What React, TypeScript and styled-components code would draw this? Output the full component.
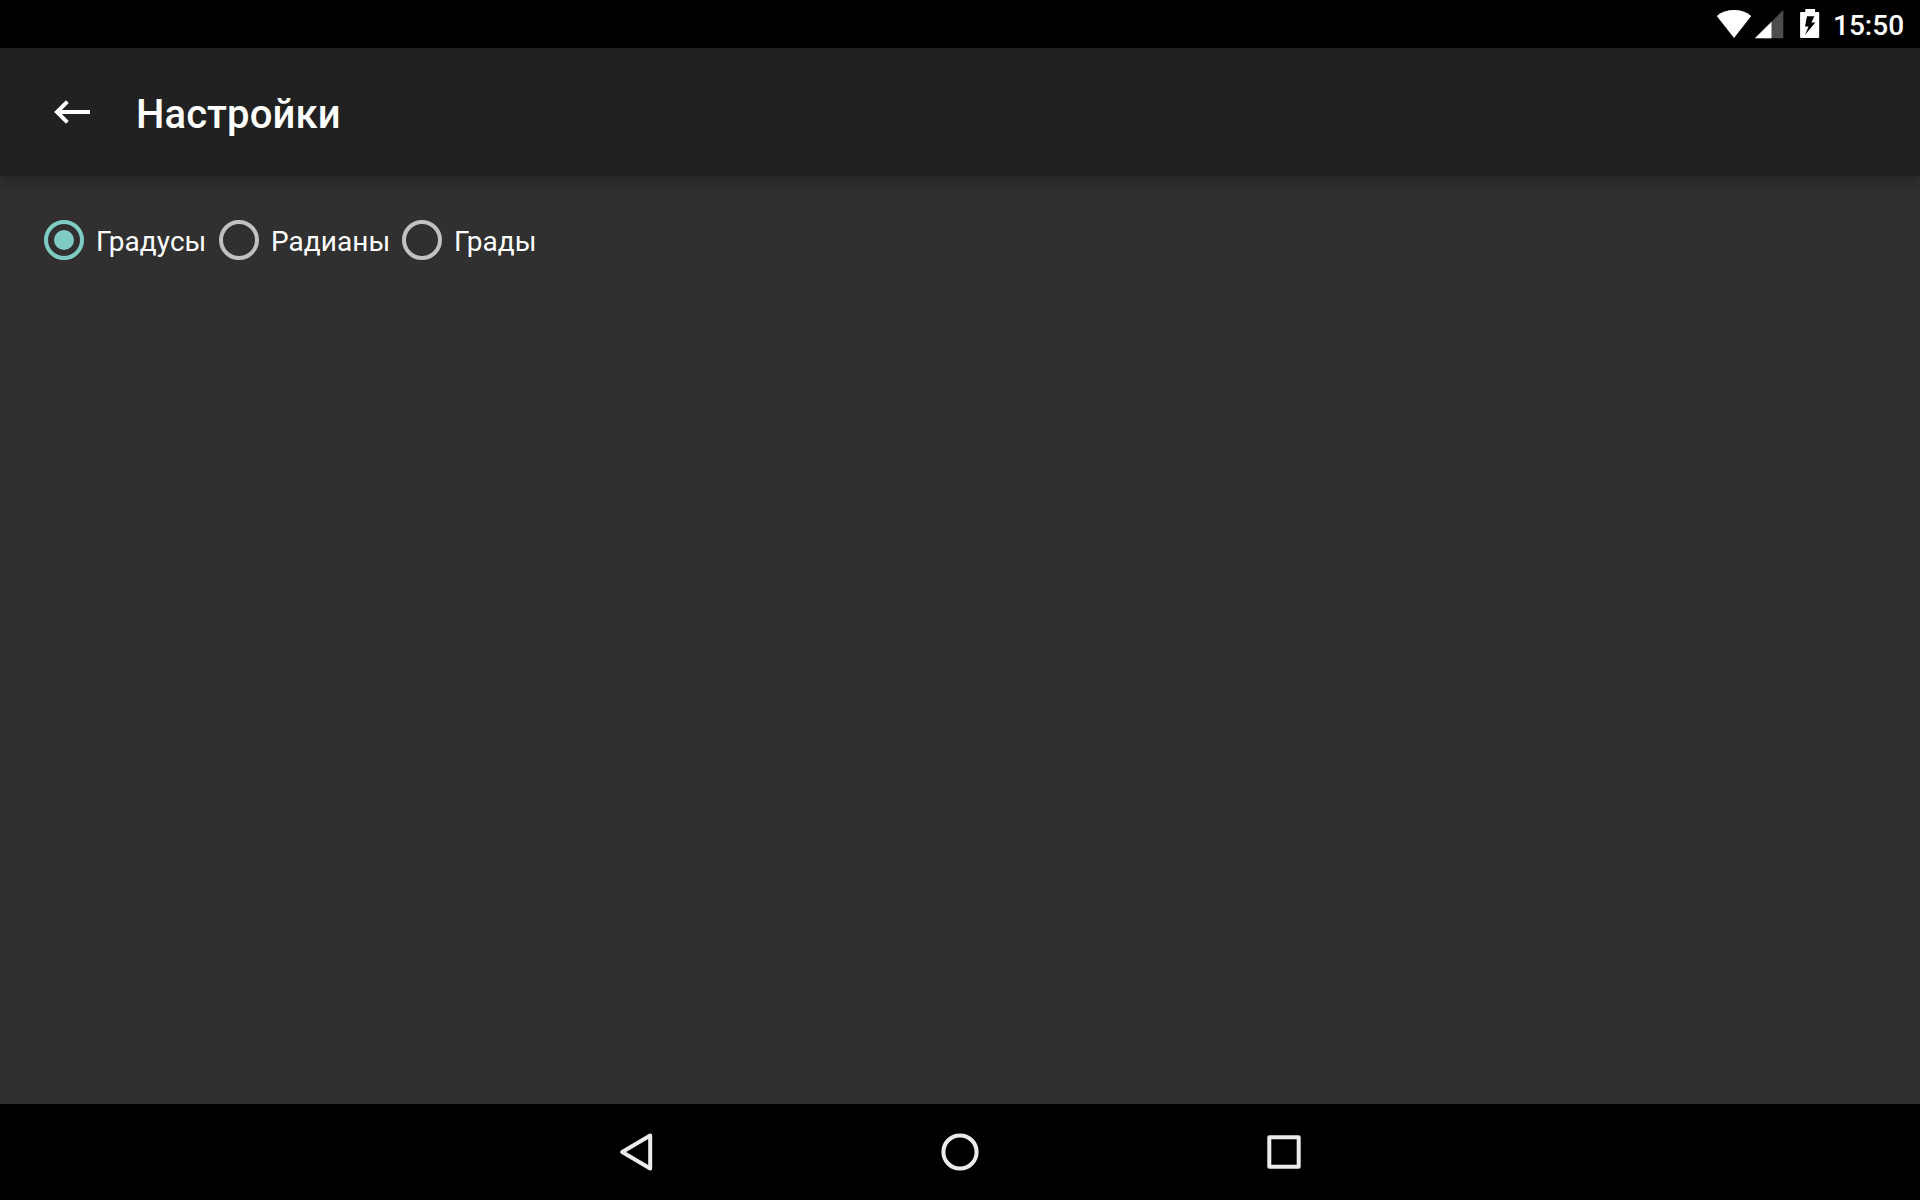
import React, { useState } from 'react';
import styled, { createGlobalStyle } from 'styled-components';

const GlobalStyle = createGlobalStyle`
  *, *::before, *::after { box-sizing: border-box; }
  html, body { margin: 0; padding: 0; background: #303030; }
  body { font-family: Roboto, "Noto Sans", sans-serif; overflow: hidden; }
  svg { display: block; flex: none; }
`;

const Screen = styled.div`
  display: flex;
  flex-direction: column;
  width: 100%;
  height: 100vh;
  background: #303030;
  color: #fff;
`;

const StatusBar = styled.header`
  display: flex;
  flex: none;
  align-items: center;
  justify-content: flex-end;
  height: 48px;
  padding-right: 16px;
  background: #000;
`;

const StatusIcons = styled.div`
  display: flex;
  height: 48px;
`;

const Clock = styled.time`
  width: 71px;
  margin-left: 11px;
  font-size: 28px;
  font-weight: 500;
  line-height: 34px;
  padding-top: 4px;
`;

const AppBar = styled.div`
  display: flex;
  flex: none;
  align-items: center;
  height: 128px;
  padding: 0 32px;
  background: #212121;
  box-shadow: 0 5px 12px rgba(0, 0, 0, 0.28);
`;

const BackButton = styled.button`
  display: flex;
  align-items: center;
  width: 104px;
  height: 128px;
  padding: 0 0 0 16px;
  border: 0;
  background: none;
  color: #fff;
`;

const Title = styled.h1`
  margin: 0;
  font-size: 40px;
  font-weight: 500;
  letter-spacing: 0.1px;
  line-height: 48px;
  padding-top: 6px;
`;

const Content = styled.main`
  flex: 1;
  padding: 32px;
`;

const RadioGroup = styled.div`
  display: flex;
`;

const RadioOption = styled.label<{ $width: number }>`
  display: flex;
  align-items: center;
  width: ${(p) => p.$width}px;
  height: 64px;
  padding-left: 12px;
  font-size: 28px;
  letter-spacing: 0.04px;
  line-height: 34px;
  white-space: nowrap;
`;

const RadioInput = styled.input`
  display: grid;
  flex: none;
  place-items: center;
  width: 40px;
  height: 40px;
  margin: 0 12px 0 0;
  border: 4px solid #c1c1c1;
  border-radius: 50%;
  appearance: none;

  &:checked {
    border-color: #80cbc4;
  }

  &:checked::before {
    content: '';
    width: 20px;
    height: 20px;
    border-radius: 50%;
    background: #80cbc4;
  }
`;

const RadioText = styled.span`
  padding-top: 4px;
`;

const NavBar = styled.nav`
  display: flex;
  flex: none;
  align-items: center;
  justify-content: center;
  height: 96px;
  background: #000;
`;

const NavButton = styled.button`
  display: flex;
  align-items: center;
  justify-content: center;
  width: 324px;
  height: 96px;
  padding: 0;
  border: 0;
  background: none;
  color: #ececec;
`;

const WifiIcon = () => (
  <svg width="36" height="48" viewBox="0 0 36 48">
    <path d="M18 38 L.8 15.9 C5.3 12 11.3 10 18 10 S30.7 12 35.2 15.9 Z" fill="#fff" />
  </svg>
);

const SignalIcon = () => (
  <svg width="32" height="48" viewBox="0 0 32 48">
    <path d="M2.9 38.3 L31.3 9.9 V38.3 Z" fill="#4d4d4d" />
    <path d="M2.9 38.3 L19.5 21.7 V38.3 Z" fill="#fff" />
  </svg>
);

const BatteryIcon = () => (
  <svg width="38" height="48" viewBox="0 0 38 48">
    <path
      fillRule="evenodd"
      d="M21.3 9 H31 V12 H34.2 Q35.2 12 35.2 13 V37 Q35.2 38 34.2 38 H17.1 Q16.1 38 16.1 37 V13 Q16.1 12 17.1 12 H21.3 Z M23 16.2 L21 26.4 H24.6 L20.8 35 L31.4 22.6 H27.4 L30.4 16.2 Z"
      fill="#fff"
    />
  </svg>
);

const BackArrow = () => (
  <svg width="48" height="48" viewBox="0 0 48 48" fill="none" stroke="currentColor" strokeWidth="4">
    <path d="M42 24 H9 M19.4 13.6 L9 24 L19.4 34.4" />
  </svg>
);

const NavIcon = ({ children }: { children: React.ReactNode }) => (
  <svg width="48" height="48" viewBox="0 0 48 48" fill="none" stroke="currentColor" strokeWidth="4" strokeLinejoin="round">
    {children}
  </svg>
);

const units = [
  { id: 'deg', label: 'Градусы', width: 175 },
  { id: 'rad', label: 'Радианы', width: 183 },
  { id: 'grad', label: 'Грады', width: 150 },
];

export default function App() {
  const [unit, setUnit] = useState('deg');
  return (
    <>
      <GlobalStyle />
      <Screen>
        <StatusBar>
          <StatusIcons>
            <WifiIcon />
            <SignalIcon />
            <BatteryIcon />
          </StatusIcons>
          <Clock>15:50</Clock>
        </StatusBar>
        <AppBar>
          <BackButton>
            <BackArrow />
          </BackButton>
          <Title>Настройки</Title>
        </AppBar>
        <Content>
          <RadioGroup>
            {units.map((u) => (
              <RadioOption key={u.id} $width={u.width}>
                <RadioInput type="radio" name="unit" checked={unit === u.id} onChange={() => setUnit(u.id)} />
                <RadioText>{u.label}</RadioText>
              </RadioOption>
            ))}
          </RadioGroup>
        </Content>
        <NavBar>
          <NavButton>
            <NavIcon>
              <path d="M10.2 24 L38.2 7.6 V40.4 Z" />
            </NavIcon>
          </NavButton>
          <NavButton>
            <NavIcon>
              <circle cx="24" cy="24" r="16.6" />
            </NavIcon>
          </NavButton>
          <NavButton>
            <NavIcon>
              <rect x="9.3" y="9.3" width="29.4" height="29.4" />
            </NavIcon>
          </NavButton>
        </NavBar>
      </Screen>
    </>
  );
}
